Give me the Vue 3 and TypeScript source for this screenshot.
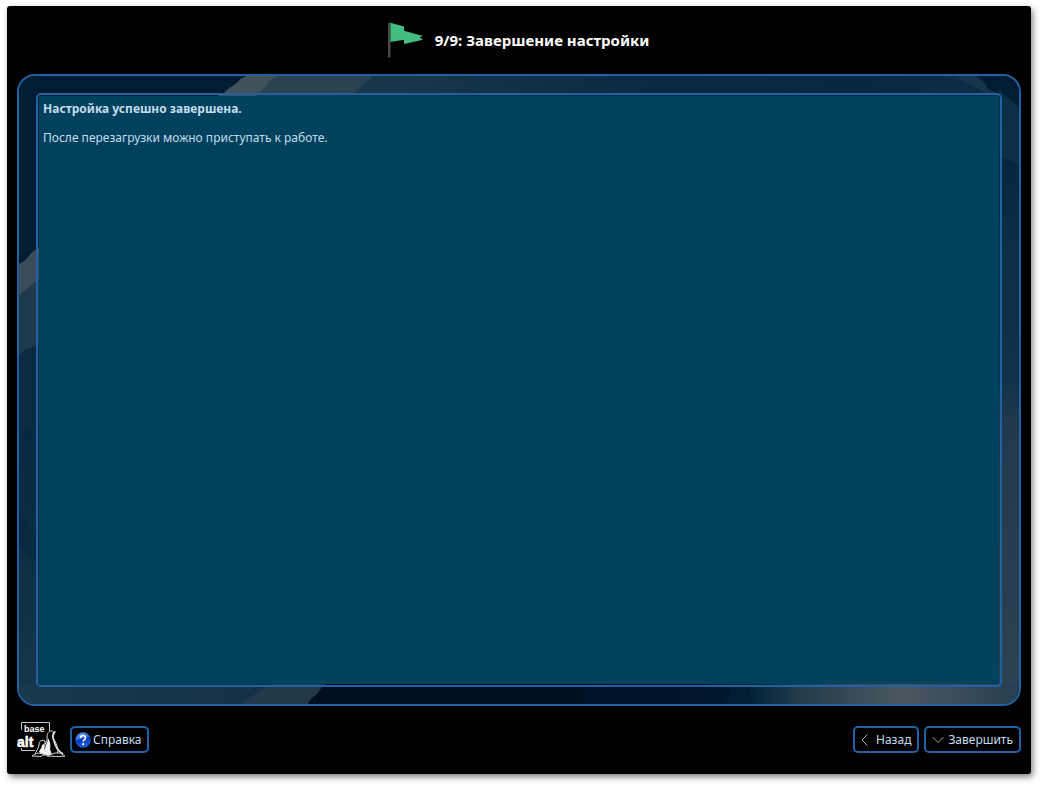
<script setup lang="ts">
const step = 9
const total = 9
const title = 'Завершение настройки'
const heading = 'Настройка успешно завершена.'
const message = 'После перезагрузки можно приступать к работе.'
</script>

<template>
  <div class="screen">
    <div class="window">
      <header class="header">
        <svg class="flag" viewBox="0 0 48 48" aria-hidden="true">
          <path d="M7 6.500h2.500v35H7z" fill="#484848" />
          <path d="M9.500 6.800L23 10.500V14.700L42 20L38.700 21.300L42 23.700L23 28V23.700L9.500 26z" fill="#43bd82" />
        </svg>
        <h1 class="title">{{ step }}/{{ total }}: {{ title }}</h1>
      </header>

      <main class="panel">
        <svg class="wallpaper" viewBox="0 0 1000 628" preserveAspectRatio="none" aria-hidden="true">
          <defs>
            <linearGradient id="topHaze" x1="0" x2="1">
              <stop offset="0" stop-color="#203c4d" />
              <stop offset="0.250" stop-color="#183549" />
              <stop offset="0.500" stop-color="#0b2b42" />
              <stop offset="0.800" stop-color="#082840" />
              <stop offset="1" stop-color="#0d2f46" />
            </linearGradient>
            <linearGradient id="rightHaze" x1="0" x2="0" y1="0" y2="1">
              <stop offset="0" stop-color="#0c2d46" />
              <stop offset="0.450" stop-color="#103149" />
              <stop offset="0.550" stop-color="#21394c" />
              <stop offset="1" stop-color="#2b4352" />
            </linearGradient>
            <linearGradient id="rightShade" x1="0" x2="0" y1="0" y2="1">
              <stop offset="0" stop-color="#06263f" />
              <stop offset="0.400" stop-color="#0c2e46" />
              <stop offset="0.900" stop-color="#12324a" />
              <stop offset="1" stop-color="#1b374b" />
            </linearGradient>
            <linearGradient id="bottomDark" x1="0" x2="1">
              <stop offset="0" stop-color="#000e20" />
              <stop offset="0.600" stop-color="#001124" />
              <stop offset="1" stop-color="#00172a" />
            </linearGradient>
            <linearGradient id="bottomGlow" x1="0" x2="1">
              <stop offset="0" stop-color="#022238" />
              <stop offset="0.180" stop-color="#223c4b" />
              <stop offset="0.560" stop-color="#4b575f" />
              <stop offset="0.680" stop-color="#42505c" />
              <stop offset="1" stop-color="#263f51" />
            </linearGradient>
            <linearGradient id="leftHaze" x1="0" x2="0" y1="0" y2="1">
              <stop offset="0" stop-color="#052942" />
              <stop offset="0.350" stop-color="#0b2c42" />
              <stop offset="1" stop-color="#17374a" />
            </linearGradient>
            <linearGradient id="bottomLeft" x1="0" x2="1">
              <stop offset="0" stop-color="#19394c" />
              <stop offset="1" stop-color="#132f45" />
            </linearGradient>
          </defs>
          <path d="M0 0H1000V628H0z" fill="#001d33" />
          <path d="M198 20Q207 17 210 12Q215 10 220 5Q222 2 228 0H958L965 6L970 14L982 22L1000 36V80H198z" fill="url(#topHaze)" />
          <path d="M198 20Q207 17 210 12Q215 10 220 5Q222 2 228 0H260Q250 3 249 8Q244 15 236 20z" fill="#435159" />
          <path d="M260 0H354L333 19H236Q244 15 249 8Q250 3 260 0z" fill="#294352" />
          <path d="M935 0H957L964 7L970 14L980 18V24L970 18L957 12z" fill="#15364a" />
          <path d="M980 14L1000 32V628H980z" fill="url(#rightHaze)" />
          <path d="M980 80L1000 88V324L980 330z" fill="url(#rightShade)" />
          <path d="M0 188Q6 185 9 181Q14 174 22 171V203Q16 206 11 211Q6 215 0 219z" fill="#3b4b57" />
          <path d="M0 219Q6 215 11 211Q16 206 22 203V268Q16 270 12 272Q6 273 0 279z" fill="#1e394b" />
          <path d="M0 279Q6 273 12 272Q16 270 22 268V352L0 357z" fill="#0a2c42" />
          <path d="M0 356L22 351V628H0z" fill="url(#leftHaze)" />
          <path d="M0 438L8 447L22 466V490L0 470z" fill="#05243c" opacity="0.400" />
          <path d="M0 608H310V628H0z" fill="url(#bottomLeft)" />
          <path d="M221 628L232 621L242 614L254 607H310Q302 610 300 616Q295 621 292 623L289 628z" fill="#213949" />
          <path d="M310 607H735V628H289L292 623Q295 621 300 616Q302 610 310 607z" fill="url(#bottomDark)" />
          <path d="M705 628L711 618L709 607H736V628z" fill="#001d31" />
          <path d="M732 607H1000V628H732L734 621L731 615z" fill="url(#bottomGlow)" />
        </svg>
        <section class="notice">
          <div class="notice-body">
            <p class="lead">{{ heading }}</p>
            <p>{{ message }}</p>
          </div>
        </section>
      </main>

      <footer class="footer">
        <svg class="logo" viewBox="0 0 48 37" role="img" aria-label="base alt">
          <path d="M4.500 9V1.500H32.500V10M4.500 27V29.500H18" fill="none" stroke="#c8c8c8" />
          <text class="logo-text" x="7" y="11" font-size="9">base</text>
          <text class="logo-text logo-alt" x="0" y="26" font-size="14">alt</text>
          <path d="M30 16C30 12 32 10 34 10C37 10 38 12 36 16C37 20 41 24 41 29L40 34H28L27 28C27 23 31 21 30 16z" fill="#000" stroke="#ddd" />
          <path d="M31 17C33 20 34 24 33 28L35 34H29L28 29C28 24 31 22 31 17z" fill="#f2f2f2" />
          <path d="M38.500 10.500C35 12 35 16 37 20C38 25 41 30 46 33" fill="none" stroke="#e6e6e6" stroke-width="1.500" />
          <path d="M18 34C18 30 22 28 22 24C22 20 25 18 28 20C29 23 25 25 26 29L28 34z" fill="#000" stroke="#ddd" />
          <path d="M25 24L27 23C26 27 28 29 30 33L25 33L22 31C23 28 25 27 25 24z" fill="#f4f4f4" />
          <path d="M15 35L20 32L27 33L24 35.500zM30 35L38 32H43L48 35L42 35.500z" fill="#000" stroke="#ccc" />
        </svg>
        <button class="button help" type="button">
          <svg class="help-icon" viewBox="0 0 16 16" aria-hidden="true">
            <defs>
              <linearGradient id="ball" x1="0" x2="0.300" y1="0" y2="1">
                <stop offset="0" stop-color="#7aa9f5" />
                <stop offset="0.480" stop-color="#2f6ce0" />
                <stop offset="0.520" stop-color="#0736b8" />
                <stop offset="1" stop-color="#1762e4" />
              </linearGradient>
            </defs>
            <circle cx="8" cy="8" r="7.600" fill="url(#ball)" stroke="#1749bb" stroke-width="0.600" />
            <path d="M5.500 6C5.500 2.800 10.800 2.900 10.600 5.800C10.500 7.600 8.200 7.600 8.200 9.600" fill="none" stroke="#fff" stroke-width="1.600" />
            <circle cx="8.200" cy="12.200" r="1.100" fill="#fff" />
          </svg>
          <span>Справка</span>
        </button>
        <span class="spacer"></span>
        <button class="button back" type="button">
          <svg class="chevron-left" viewBox="0 0 8 12" aria-hidden="true"><path d="M6.500 0.500L1 6L6.500 11.500" /></svg>
          <span>Назад</span>
        </button>
        <button class="button finish" type="button">
          <svg class="chevron-down" viewBox="0 0 12 8" aria-hidden="true"><path d="M0.500 1L6 6.500L11.500 1" /></svg>
          <span>Завершить</span>
        </button>
      </footer>
    </div>
  </div>
</template>

<style>
body {
  margin: 0;
  background: #fff;
}
</style>

<style scoped>
.screen {
  box-sizing: border-box;
  display: flex;
  min-height: 100vh;
  padding: 6px 13px 14px 7px;
  font-family: "Noto Sans", sans-serif;
  font-size: 12px;
}

.window {
  flex: 1;
  display: flex;
  flex-direction: column;
  box-sizing: border-box;
  padding: 0 10px;
  border-radius: 3px;
  background: #000;
  box-shadow: 2px 3px 6px rgba(0, 0, 0, 0.5);
}

.header {
  display: flex;
  align-items: center;
  justify-content: center;
  gap: 6px;
  height: 68px;
}

.flag {
  width: 48px;
  height: 48px;
}

.title {
  margin: 0;
  padding-right: 8px;
  color: #fff;
  font-size: 15px;
  font-weight: 700;
  line-height: 20px;
}

.panel {
  position: relative;
  flex: 1;
  display: flex;
  padding: 17px;
  border: 2px solid #2062a6;
  border-radius: 18px;
  overflow: hidden;
}

.wallpaper {
  position: absolute;
  inset: 0;
  width: 100%;
  height: 100%;
}

.notice {
  position: relative;
  flex: 1;
  display: flex;
  padding: 1px;
  border: 2px solid #2062a6;
  border-radius: 5px;
}

.notice-body {
  flex: 1;
  padding: 4px;
  border-radius: 2px;
  background: #00425d;
  color: #c3dcec;
}

.notice-body p {
  margin: 0 0 12px;
  line-height: 17px;
}

.notice-body .lead {
  font-weight: 700;
}

.footer {
  display: flex;
  align-items: center;
  box-sizing: border-box;
  gap: 5px;
  height: 68px;
  padding-bottom: 1px;
}

.logo {
  width: 48px;
  height: 37px;
}

.logo-text {
  fill: #fff;
  font-family: "Liberation Sans", sans-serif;
  font-weight: 700;
}

.logo-alt {
  stroke: #fff;
  stroke-width: 0.5;
}

.spacer {
  flex: 1;
}

.button {
  display: flex;
  align-items: center;
  box-sizing: border-box;
  height: 27px;
  border: 2px solid #2062a6;
  border-radius: 5px;
  background: #000;
  color: #c3dcec;
  font: inherit;
}

.help {
  gap: 2px;
  padding: 0 5px 0 3px;
}

.back {
  gap: 7px;
  padding: 0 6px;
}

.finish {
  gap: 4px;
  padding: 0 6px;
}

.help-icon {
  width: 16px;
  height: 16px;
}

.chevron-left {
  width: 8px;
  height: 12px;
}

.chevron-down {
  width: 12px;
  height: 8px;
}

.chevron-left path,
.chevron-down path {
  fill: none;
  stroke: #a8a8a8;
}
</style>
